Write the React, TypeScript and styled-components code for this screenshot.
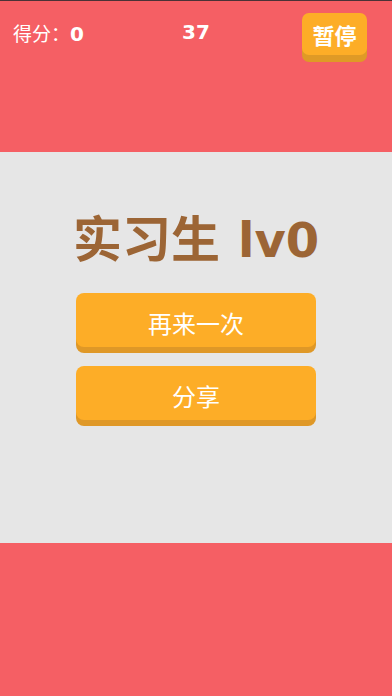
import React from "react";
import styled, { createGlobalStyle } from "styled-components";

const Global = createGlobalStyle`
  html, body { margin: 0; padding: 0; background: #f55f64; }
  body { font-family: "DejaVu Sans", "Noto Sans CJK SC", sans-serif; }
  * { box-sizing: border-box; }
`;

const Page = styled.div`
  width: 392px;
  height: 696px;
  display: flex;
  flex-direction: column;
  background: #f55f64;
  overflow: hidden;
`;

const Header = styled.div`
  height: 152px;
  background: #f55f64;
  border-top: 1px solid #4a3236;
  padding: 12px 13px 0 13px;
`;

const HeaderRow = styled.div`
  display: grid;
  grid-template-columns: 1fr auto 1fr;
  align-items: center;
  height: 42px;
`;

const Score = styled.div`
  justify-self: start;
  color: #fff;
  font-size: 19px;
  font-family: "Noto Sans CJK SC", "DejaVu Sans", sans-serif;
  display: flex;
  align-items: baseline;
  margin-top: -4px;
`;

const Num = styled.span`
  font-family: "DejaVu Sans", sans-serif;
  font-weight: bold;
  font-size: 20px;
`;

const Timer = styled.div`
  color: #fff;
  font-family: "DejaVu Sans", sans-serif;
  font-weight: bold;
  font-size: 20px;
  margin-top: -4px;
`;

const PauseButton = styled.div`
  justify-self: end;
  margin-right: 12px;
  width: 65px;
  height: 42px;
  border-radius: 7px;
  background: #fdad27;
  box-shadow: 0 7px 0 #df9a26;
  color: #fff;
  font-family: "Noto Sans CJK SC", sans-serif;
  font-weight: bold;
  font-size: 22px;
  display: flex;
  align-items: center;
  justify-content: center;
`;

const Middle = styled.div`
  height: 391px;
  background: #e6e6e6;
  display: flex;
  flex-direction: column;
  align-items: center;
  padding-top: 54px;
`;

const Title = styled.div`
  color: #9c6535;
  font-size: 49px;
  line-height: 60px;
  font-weight: bold;
  font-family: "Noto Sans CJK SC", sans-serif;
  white-space: nowrap;
  display: flex;
  align-items: baseline;
`;

const Latin = styled.span`
  font-family: "DejaVu Sans", sans-serif;
  font-weight: bold;
  font-size: 48px;
  margin-left: 18px;
`;

const Buttons = styled.div`
  display: flex;
  flex-direction: column;
  gap: 19px;
  margin-top: 23px;
`;

const ActionButton = styled.div`
  width: 240px;
  height: 54px;
  border-radius: 8px;
  background: #fdad27;
  box-shadow: 0 6px 0 #df9827;
  color: #fff;
  font-family: "Noto Sans CJK SC", sans-serif;
  font-size: 24px;
  display: flex;
  align-items: center;
  justify-content: center;
  padding-top: 4px;
`;

const Footer = styled.div`
  flex: 1;
  background: #f55f64;
`;

export default function App() {
  return (
    <>
      <Global />
      <Page>
        <Header>
          <HeaderRow>
            <Score>
              得分：<Num>0</Num>
            </Score>
            <Timer>37</Timer>
            <PauseButton>暂停</PauseButton>
          </HeaderRow>
        </Header>
        <Middle>
          <Title>
            实习生<Latin>lv0</Latin>
          </Title>
          <Buttons>
            <ActionButton>再来一次</ActionButton>
            <ActionButton>分享</ActionButton>
          </Buttons>
        </Middle>
        <Footer />
      </Page>
    </>
  );
}
